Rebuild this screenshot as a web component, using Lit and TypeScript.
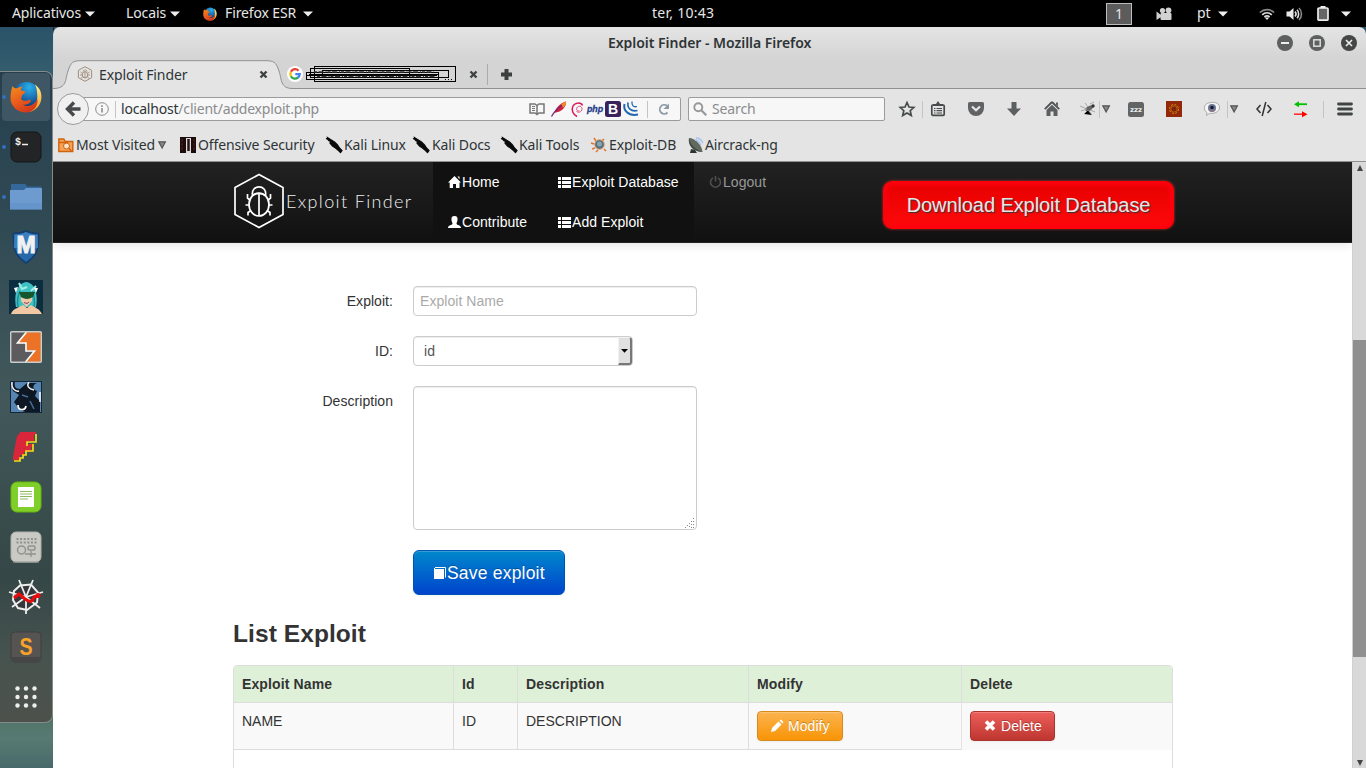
import { LitElement, html, css, svg } from "lit";
import { customElement } from "lit/decorators.js";

/* ---------- shared pieces ---------- */

const uiFont = css`
  :host {
    font-family: "Noto Sans", "Open Sans", sans-serif;
    font-size: 14px;
    line-height: 18px;
    letter-spacing: -0.12px;
    white-space: nowrap;
  }
  * {
    box-sizing: border-box;
  }
  svg {
    display: block;
    flex: none;
    overflow: visible;
  }
`;

const icon = (size: number, body: unknown, w = size) =>
  html`<svg width=${w} height=${size} viewBox="0 0 ${w} ${size}">${body}</svg>`;

const caret = icon(6, svg`<path d="M0 .5h10L5 5.5z" fill="#eee"/>`, 10);
const grayCaret = icon(8, svg`<path d="M.8.8h6.6L4.1 7z" fill="#888" stroke="#555" stroke-width="1.2"/>`, 8);
const cross = icon(9, svg`<path d="M1.5 1.500l6 6M7.500 1.500l-6 6" stroke="#3f4243" stroke-width="2.4"/>`);

const firefox = (s: number) => html`<svg width=${s} height=${s} viewBox="0 0 32 32">
  <defs>
    <radialGradient id="globe" cx=".6" cy=".2" r=".8"><stop offset="0" stop-color="#28b1e8"/><stop offset=".5" stop-color="#1b6fb5"/><stop offset="1" stop-color="#0b2f66"/></radialGradient>
    <linearGradient id="fox" x1=".1" y1="0" x2=".6" y2="1"><stop offset="0" stop-color="#f28a1c"/><stop offset=".55" stop-color="#ea5b1c"/><stop offset="1" stop-color="#d2381c"/></linearGradient>
    <linearGradient id="tail" x1="0" y1="0" x2="0" y2="1"><stop offset="0" stop-color="#fdf08a"/><stop offset="1" stop-color="#f7941d"/></linearGradient>
  </defs>
  <circle cx="16.5" cy="14.5" r="13.5" fill="url(#globe)"/>
  <path d="M25 3.500C30 7 32 12 31.300 18C30.500 25 25 30 19 31C24 27 27.500 22 27.300 15C27.200 10 26.500 6 25 3.500z" fill="url(#tail)"/>
  <path d="M2.500 5C3.500 7 5 7.500 7 7.300C9 6 10 5.500 12.500 5.700C11.500 7 10.500 8.500 11 9.600C12.500 10.200 14.500 10 15.500 10.700C15 12.500 12.500 13 12 14.500C11.500 16 11.500 17.500 11 18C13 20 16 20.500 18.500 19C20 18.500 21.500 19.500 20.500 21C18 24 15 24 13 23.500C18 27 24.500 24 27.500 18C28.500 26 22 31.500 16 31.500C7 31.500 .5 25 .5 17C.5 12 1.500 8 2.500 5z" fill="url(#fox)"/>
</svg>`;

/* ---------- desktop top bar ---------- */

@customElement("system-bar")
class SystemBar extends LitElement {
  static styles = [uiFont, css`
    :host {
      display: grid;
      grid-template-columns: 73px 41px 44px 33px 22px 78px 349px 454px 50px 41px 21px 41px 27px 31px 24px 1fr;
      padding-left: 12px;
      height: 27px;
      align-items: center;
      background: #000;
      color: #e6e6e6;
    }
    span {
      margin-top: -1px;
    }
    .clock {
      letter-spacing: 0.25px;
    }
    .space {
      margin-top: 0;
      width: 26px;
      height: 22px;
      border: 1px solid #bcbcbc;
      background: #5c5c5c;
      text-align: center;
      line-height: 19px;
    }
  `];

  render() {
    return html`
      <span>Aplicativos</span>${caret}
      <span>Locais</span>${caret}
      ${firefox(14)}<span>Firefox ESR</span>${caret}
      <span class="clock">ter, 10:43</span>
      <span class="space">1</span>
      ${icon(14, svg`<g fill="#d2d2d2"><circle cx="6.500" cy="3.600" r="2.600"/><circle cx="12.500" cy="3.300" r="2.900"/><rect x="4.500" y="6" width="11" height="7" rx="1"/><path d="M.5 4.500L5 8v2L.5 13z"/></g>`, 16)}
      <span>pt</span>${caret}
      ${icon(12, svg`<g fill="none" stroke="#ddd" stroke-width="1.700"><path d="M.8 4.500C5 .6 11 .6 15.200 4.500" stroke="#888"/><path d="M3.200 6.800C6 4.300 10 4.300 12.800 6.800"/><path d="M5.400 9C7 7.700 9 7.700 10.600 9"/></g><path d="M5.800 9.500h4.400L8 12z" fill="#eee"/>`, 16)}
      ${icon(14, svg`<path d="M.5 4.500h3L7.500 1v12l-4-3.500h-3z" fill="#e8e8e8"/><g fill="none" stroke="#e0e0e0" stroke-width="1.600"><path d="M9 4.500C10.300 6 10.300 8 9 9.500"/><path d="M11 2.800C13.200 5 13.200 9 11 11.200"/><path d="M13 1C16.300 4 16.300 10 13 13" stroke="#888"/></g>`, 16)}
      ${icon(16, svg`<path d="M3.500 0h5v2h-5z" fill="#eee"/><rect x="1" y="2" width="10" height="12.200" rx="1" fill="#666" stroke="#eee" stroke-width="1.700"/>`, 12)}
      ${caret}
    `;
  }
}

/* ---------- launcher dock ---------- */

const dockIcons = [
  firefox(32),
  icon(32, svg`<rect x="1" y="1" width="30" height="30" rx="6" fill="#222426" stroke="#151617"/><text x="5" y="13.500" font-family="Liberation Mono, monospace" font-weight="bold" font-size="10" fill="#eee">$</text><path d="M12 13.500h6" stroke="#eee" stroke-width="1.500"/>`),
  icon(32, svg`<path d="M1 3h14v-.5l2 3h14V9H1z" fill="#34679a"/><path d="M0 9h14l2-2h16v21.500H0z" fill="#6d9bd0"/><path d="M0 22h32v6.500H0z" fill="#5f8fc6" opacity=".5"/>`),
  icon(34, svg`<path d="M16 1C20 3 24 3.500 28.500 3.500C29 16 28.500 25 16 33C3.500 25 3 16 3.500 3.500C8 3.500 12 3 16 1z" fill="#2768a9" stroke="#123e70" stroke-width="1.500"/><path d="M16 2C20 4 24 4.500 27.500 4.500L28 18H4L4.500 4.500C8 4.500 12 4 16 2z" fill="#3b7fc0"/><text x="16" y="23" text-anchor="middle" font-family="Liberation Sans, sans-serif" font-weight="bold" font-size="23" fill="#f1f1f1" stroke="#f1f1f1">M</text>`, 32),
  icon(34, svg`<rect width="34" height="34" fill="#0a2d40"/><path d="M7 27C5 16 7 4 17 2C27 3 29 16 27 27L22 27H11z" fill="#3fc1c4"/><path d="M9 27c-1-6 0-12 2-16M25 27c1-6 0-12-2-16" stroke="#23888f" stroke-width="1.500" fill="none"/><path d="M10 3l3 6 5-2M27 6l-5 5" stroke="#9ff0e4" stroke-width="2" fill="none"/><path d="M12 12h11v9l-5.500 6-5.500-6z" fill="#efc8a8"/><path d="M10 12h16l-2 5c-5 3-9 2-12 0z" fill="#17572d"/><path d="M2 34c2-6 8-6 12-9l4 3 4-3c4 3 8 3 11 9z" fill="#f1c8a3"/><path d="M5 8l2 5 2-6zM29 8l-2 5-2-5z" fill="#fff"/><path d="M15 22.500l3 1 2-1.500" stroke="#8c4060" fill="none"/>`),
  icon(32, svg`<rect x=".5" y=".5" width="31" height="31" fill="#5c5c5f"/><path d="M16.500 1H31v30H16.500L25 19H16V12H8z" fill="#ec7227"/><path d="M16.500 1L7.500 12H16v8h8.500L15.500 31" stroke="#fff" stroke-width="1.600" fill="none"/><rect x=".7" y=".7" width="30.600" height="30.600" rx="1" fill="none" stroke="#c9cdcc" stroke-width="1.400"/>`),
  icon(32, svg`<rect width="32" height="32" fill="#5586b3"/><path d="M0 0h5C4 5 5 8 10 8L17 2h10c-5 2-5 6 0 8l-2 5 5 5v12H17c-2-2-4-1-7-3L4 21l5-7-6-4z" fill="#0e1724"/><path d="M2 1C1 7 5 11 9 10M19 1c-3 4 0 7 5 8" stroke="#f2f2f2" stroke-width="1.500" fill="none"/><path d="M8 24c0 6 7 6 8 1" stroke="#fff" stroke-width="1.700" fill="none"/><path d="M30 11v10" stroke="#fff" stroke-width="1.500"/><path d="M12 14l6 2M20 20l4 8" stroke="#456f97" stroke-width="1.500"/><rect x=".5" y=".5" width="31" height="31" fill="none" stroke="#14273a"/>`),
  icon(32, svg`<path d="M10 1h16v2h-2v7h-7v3h6v3h-2v5h-7v3h-4v5H3V26L7 5l3-3z" fill="#d9263b"/><path d="M26 3v8h-9v4M23 13v7h-7v4h-3v3h-3v3H4" fill="none" stroke="#f2dc19" stroke-width="1.700"/>`),
  icon(32, svg`<rect x="1" y="1" width="30" height="30" rx="6" fill="#80ce2a" stroke="#63b60e"/><rect x="8" y="6" width="16" height="20" fill="#fff"/><path d="M10 10.500h12M10 13h12M10 15.500h12M10 18h8" stroke="#90b95f" stroke-width="1"/>`),
  icon(32, svg`<rect x="1" y="1" width="30" height="30" rx="5" fill="#c9cac4" stroke="#aeb0ab"/><path d="M3 31h26" stroke="#9fa19c"/><path d="M6.500 8h20M6.500 11.500h20" stroke="#8f918d" stroke-width="2" stroke-dasharray="2 1.600"/><circle cx="11.500" cy="19" r="4" fill="none" stroke="#8f918d" stroke-width="1.500"/><rect x="18" y="15" width="7" height="4" rx="1.500" fill="none" stroke="#8f918d" stroke-width="1.500"/><path d="M15 23h11M21 20v6" stroke="#8f918d" stroke-width="1.300"/>`),
  icon(34, svg`<path d="M11 5.500l11-1 7 8-1 10-10 7.500-9-2-5-8 1-9z" fill="#35373a" stroke="#eee" stroke-width="2"/><g stroke="#eee" stroke-width="1.800" fill="none"><path d="M17 17L10 0M17 17L24 0M17 17L34 12M17 17l14 11M17 17v17M17 17L3 27M17 17L0 12"/></g><path d="M5 18l5-4 6 5c4 3 7 4 9-2l5-1" stroke="#e50d0d" stroke-width="3.200" fill="none"/><circle cx="29" cy="15.500" r="2.600" fill="#e50d0d"/>`),
  icon(32, svg`<rect x="1" y="1" width="30" height="30" rx="4" fill="#555453" stroke="#403f3f"/><path d="M1 26h30v3q0 2-3 2H4q-3 0-3-2z" fill="#474646"/><text x="16" y="23.500" text-anchor="middle" font-family="Liberation Sans, sans-serif" font-weight="bold" font-size="23" textLength="13" lengthAdjust="spacingAndGlyphs" fill="#f6a327">S</text>`),
  icon(24, svg`<g fill="#eee">${[3.5, 12, 20.5].map((y) => [3.5, 12, 20.5].map((x) => svg`<circle cx=${x} cy=${y} r="2.200"/>`))}</g>`),
];

@customElement("side-dock")
class SideDock extends LitElement {
  static styles = [uiFont, css`
    :host {
      display: block;
      width: 53px;
      padding-top: 44px;
      background: linear-gradient(180deg, #2b5269 0, #36616f 8%, #4a6b68 60%, #48695f 90%, #577b72 96%, #47696a 100%);
      border-right: 1px solid #17262b;
    }
    .panel {
      height: 652px;
      padding: 1px 0;
      border: 1px solid #858b8b;
      border-left: 0;
      border-radius: 0 8px 8px 0;
      background: linear-gradient(180deg, #263f4e 0, #314b55 25%, #42585a 50%, #354746 78%, #47534f 90%, #4d514b 100%);
    }
    .slot {
      display: grid;
      grid-template-columns: 8px 36px;
      width: 49px;
      height: 50px;
      padding-bottom: 2px;
      align-items: center;
    }
    .slot svg {
      justify-self: center;
    }
    .dot {
      width: 4px;
      height: 4px;
      margin-left: 2px;
      border-radius: 50%;
    }
    .running .dot {
      background: #3370bd;
    }
    .active {
      height: 48px;
      margin: 0 0 2px 2px;
      width: 48px;
      grid-template-columns: 6px 36px;
      padding-bottom: 0;
      border-radius: 4px;
      background: #3f5664;
    }
    .active .dot {
      margin-left: 0;
    }
  `];

  render() {
    return html`<div class="panel">
      ${dockIcons.map((i, n) => html`<div class="slot ${n < 3 ? "running" : ""} ${n === 0 ? "active" : ""}"><i class="dot"></i>${i}</div>`)}
    </div>`;
  }
}

/* ---------- browser chrome ---------- */

const bug = (c: string) => svg`<path d="M8 .7l6.600 3.600v7.400L8 15.300l-6.600-3.600V4.300z" fill="none" stroke=${c} stroke-width="1"/><ellipse cx="8" cy="8.800" rx="2.700" ry="3.200" fill="none" stroke=${c}/><path d="M8 6v6M6 5.500c0-2 4-2 4 0M3.500 6l2 1.500M12.500 6l-2 1.500M3 9h2.500M13 9h-2.500M3.800 12.300l2-1.500M12.200 12.300l-2-1.500" stroke=${c} fill="none" stroke-width=".9"/>`;

const kali = icon(16, svg`<path d="M0 1.500l2 1-.5-2 3 2 4 2.500 3 3 2 3 2.500 2.500-1.500 2-2-2-3-2.500-3-2-2.500-3 .5-1.500-2-1 .5-1z" fill="#0a0a0a" stroke="#0a0a0a" stroke-width="1.200"/>`);

@customElement("browser-chrome")
class BrowserChrome extends LitElement {
  static styles = [uiFont, css`
    :host {
      display: block;
      height: 135px;
      color: #2e3436;
    }
    .title {
      display: grid;
      grid-template-columns: 554px 669px 32px 32px 1fr;
      height: 33px;
      padding-bottom: 1px;
      align-items: center;
      background: linear-gradient(#e4e4e4, #d4d4d4);
      border-radius: 7px 7px 0 0;
      border-left: 1px solid #d8d8d8;
    }
    .title b {
      font-weight: 600;
      letter-spacing: -0.03px;
    }
    .tabs {
      position: relative;
      display: grid;
      grid-template-columns: 22px 160px 28px 22px 160px 18px 14px 1fr;
      height: 29px;
      padding-left: 24px;
      align-items: center;
      background: #d4d4d4;
      border-bottom: 1px solid #8f9192;
    }
    .tabs span {
      padding-top: 1px;
    }
    .shape {
      position: absolute;
      left: 0;
      top: 0;
    }
    .tabs > :not(.shape) {
      position: relative;
    }
    .sep {
      width: 1px;
      height: 21px;
      background: #aaa;
    }
    .nav {
      display: grid;
      grid-template-columns: 631px 211px 23px 8px 38px 39px 37px 36px 19px 3px 26px 38px 38px 23px 3px 26px 38px 29px 14px 1fr;
      height: 40px;
      padding-left: 4px;
      align-items: center;
      background: #e4e4e4;
    }
    .address {
      display: flex;
      align-items: center;
    }
    .back {
      width: 32px;
      height: 32px;
      border: 1px solid #9b9b9b;
      border-radius: 50%;
      background: #f0f0f0;
      display: grid;
      place-items: center;
      position: relative;
      z-index: 1;
    }
    .url {
      width: 608px;
      height: 24px;
      margin-left: -16px;
      padding-left: 21px;
      border: 1px solid #9b9b9b;
      border-radius: 0 2px 2px 0;
      background: #f7f7f7;
      display: grid;
      grid-template-columns: 20px 6px 408px 22px 20px 16px 18px 18px 24px 11px 1fr;
      align-items: center;
    }
    .path {
      color: #8a8c8d;
      letter-spacing: -0.2px;
    }
    .path b {
      font-weight: 400;
      color: #2e3436;
    }
    .thin {
      width: 1px;
      height: 17px;
      background: #c4c4c4;
    }
    .search {
      width: 197px;
      height: 24px;
      padding-left: 4px;
      border: 1px solid #9b9b9b;
      border-radius: 2px;
      background: #f7f7f7;
      display: flex;
      gap: 5px;
      align-items: center;
      color: #8a8c8d;
    }
    .marks {
      display: grid;
      grid-template-columns: 18px 82px 22px 18px 128px 18px 69px 19px 69px 18px 72px 18px 79px 17px 1fr;
      height: 33px;
      padding-left: 5px;
      align-items: center;
      background: #e4e4e4;
      border-bottom: 1px solid #8f9192;
    }
  `];

  render() {
    const thin = html`<i class="thin"></i>`;
    return html`
      <div class="title">
        <span></span><b>Exploit Finder - Mozilla Firefox</b>
        ${icon(16, svg`<circle cx="8" cy="8" r="8" fill="#5e6060"/><path d="M4 8h8" stroke="#eee" stroke-width="2"/>`)}
        ${icon(16, svg`<circle cx="8" cy="8" r="8" fill="#5e6060"/><rect x="4.800" y="4.800" width="6.400" height="6.400" fill="none" stroke="#ddd" stroke-width="1.500"/>`)}
        ${icon(16, svg`<circle cx="8" cy="8" r="8" fill="#454747"/><path d="M5 5l6 6M11 5l-6 6" stroke="#eee" stroke-width="1.600"/>`)}
      </div>
      <div class="tabs">
        <svg class="shape" width="240" height="29" viewBox="0 0 240 29"><path d="M0 28.500C14 28.500 12 20 15 11C18 2 20 .7 28 .7H212C221 .7 223 2 226 11C229 20 227 28.500 240 28.500V29H0z" fill="#e4e4e4" /><path d="M0 28.500C14 28.500 12 20 15 11C18 2 20 .7 28 .7H212C221 .7 223 2 226 11C229 20 227 28.500 240 28.500" fill="none" stroke="#8f9192"/></svg>
        ${icon(16, bug("#a18d7b"))}<span>Exploit Finder</span>${cross}
        ${icon(16, svg`<circle cx="8" cy="8" r="8" fill="#fff"/><g fill="none" stroke-width="2.300"><path d="M11.500 4.600A4.700 4.700 0 0 0 3.900 5.800" stroke="#ea4335"/><path d="M3.900 5.800A4.700 4.700 0 0 0 3.900 10.200" stroke="#fbbc05"/><path d="M3.900 10.200A4.700 4.700 0 0 0 11 11.500" stroke="#34a853"/><path d="M11 11.500A4.700 4.700 0 0 0 12.700 8.200H8.300" stroke="#4285f4"/></g>`)}
        ${icon(18, svg`<g fill="none" stroke="#000"><rect x="5.500" y="1.500" width="141" height="15"/><rect x="1.500" y="3.500" width="99" height="9"/><rect x="-2.500" y="7.500" width="132" height="7"/><rect x="13.500" y="5.500" width="126" height="7"/><path d="M-2 10.500h130M0 9.500h130" stroke-width="1"/><path d="M5 7h120M8 11.500h118" stroke="#333" stroke-width="1.500" stroke-dasharray="3 1.500 5 2 1 1"/><path d="M136 14.500h8" stroke-dasharray="1 2"/></g>`, 150)}
        ${cross}<i class="sep"></i>
        ${icon(11, svg`<path d="M5.500 0v11M0 5.500h11" stroke="#3d4041" stroke-width="4"/>`)}
      </div>
      <div class="nav">
        <div class="address">
          <div class="back">${icon(16, svg`<path d="M9 1.500L2.500 8L9 14.500M3 8h12.500" fill="none" stroke="#474a4b" stroke-width="3.400"/>`)}</div>
          <div class="url">
            ${icon(14, svg`<circle cx="7" cy="7" r="6.300" fill="none" stroke="#8a8c8d"/><path d="M7 6v4.500M7 3.300v1.600" stroke="#8a8c8d" stroke-width="1.600"/>`)}
            ${thin}
            <span class="path"><b>localhost</b>/client/addexploit.php</span>
            ${icon(14, svg`<path d="M1 2h5l2 1.500L10 2h5v9h-5l-2 1.500L6 11H1zM8 3v9" fill="none" stroke="#777" stroke-width="1.500"/><path d="M3 4.500h3M3 6.500h3M3 8.500h3" stroke="#777"/>`, 16)}
            ${icon(16, svg`<path d="M15 .5C15.500 4 13 8 8.500 10.500L3 12C5 7 9 2 15 .5z" fill="#d0213c"/><path d="M15 .5C13 1 11 2.500 9.500 4l3 2.500C14.500 4.500 15.300 3 15 .5z" fill="#f08a28"/><path d="M.5 15.500C3 11 7 7 11 4" stroke="#70277a" fill="none" stroke-width="1.300"/>`)}
            ${icon(15, svg`<path d="M8.500 8.800C6 9.500 4.500 7 6.500 5C9 3 12 5.500 10.800 8C9.500 11 6 10.500 5.500 9" fill="none" stroke="#df4b7e" stroke-width="1"/><path d="M11.500 3.500C10 0 4 .5 2 4C0 8 2 12.500 6 14.500" fill="none" stroke="#d91857" stroke-width="1.500"/>`, 13)}
            ${icon(14, svg`<text x="8" y="10" text-anchor="middle" textLength="16" lengthAdjust="spacingAndGlyphs" font-family="Liberation Sans, sans-serif" font-style="italic" font-weight="bold" font-size="9.500" fill="#263b88" stroke="#263b88" stroke-width=".3">php</text>`, 16)}
            ${icon(16, svg`<rect width="16" height="16" rx="2.500" fill="#39215b"/><text x="8" y="13" text-anchor="middle" font-family="Liberation Sans, sans-serif" font-weight="bold" font-size="14" fill="#fff">B</text>`)}
            ${icon(16, svg`<g fill="none" stroke="#2367b0"><path d="M1.500 3C0 9 5 15.500 15 13.500" stroke-width="2"/><path d="M5 1.500C4 7 8 11 14.500 9.500" stroke-width="1.700"/><path d="M9 .5C8.500 4.500 10.500 6.500 14 5.500" stroke-width="1.300"/></g>`)}
            ${thin}
            ${icon(12, svg`<path d="M9.500 9.500A4.500 4.500 0 1 1 9 2.800" fill="none" stroke="#8c9ba5" stroke-width="1.800"/><path d="M11 .5V6H5.500z" fill="#8c9ba5"/>`)}
          </div>
        </div>
        <div class="search">${icon(14, svg`<circle cx="5.300" cy="5.300" r="4" fill="none" stroke="#979899" stroke-width="1.900"/><path d="M8.300 8.300l5 5" stroke="#979899" stroke-width="2.200"/>`)}<span>Search</span></div>
        ${icon(16, svg`<path d="M8 1.500l2 4.500 4.800.5-3.600 3.200 1.100 4.800L8 12l-4.300 2.500 1.100-4.800L1.200 6.500 6 6z" fill="none" stroke="#474a4b" stroke-width="1.700"/>`)}
        ${thin}
        ${icon(16, svg`<rect x="1.800" y="4" width="12.400" height="10.300" rx="1" fill="none" stroke="#474a4b" stroke-width="1.700"/><path d="M3 3h3l2-3 2 3h3v2H3z" fill="#474a4b"/><path d="M4 7.500h1.500M6.500 7.500H12M4 9.700h1.500M6.500 9.700H12M4 12h1.500M6.500 12H12" stroke="#474a4b" stroke-width="1.200"/>`)}
        ${icon(14, svg`<path d="M0 1.500Q0 0 1.500 0h13Q16 0 16 1.500V6A8 8 0 0 1 0 6z" fill="#606263"/><path d="M4 4.500L8 8.200 12 4.500" fill="none" stroke="#e8e8e8" stroke-width="2.200"/>`, 16)}
        ${icon(15, svg`<path d="M4.500 0h5v6.500H14L7 14 0 6.500h4.500z" fill="#5c5f60"/>`, 14)}
        ${icon(16, svg`<path d="M8 1L.8 8.200M8 1l7.200 7.200" stroke="#4e5152" stroke-width="1.800"/><path d="M8 3.800L13.500 9v6H9.500v-4.500h-3V15h-4V9zM12 1.500h2v4l-2-2z" fill="#5c5f60"/>`)}
        ${icon(14, svg`<ellipse cx="9" cy="6.500" rx="4" ry="2.200" fill="#666" transform="rotate(-30 9 6.500)"/><circle cx="13" cy="4" r="1.700" fill="#333"/><path d="M0 4l7 3M1 9l6-2M4 12l4-4 4 5M5 1l3 4M10 2l4-2M10 8l5 2" stroke="#999" stroke-width=".8"/>`, 16)}
        ${thin}${grayCaret}
        ${icon(15, svg`<rect width="16" height="15" rx="2.500" fill="#626465"/><text x="8" y="10" text-anchor="middle" textLength="12" font-family="DejaVu Sans, sans-serif" font-weight="bold" font-size="7" fill="#eee">zzz</text>`, 16)}
        ${icon(16, svg`<rect width="16" height="16" fill="#91290a"/><circle cx="8" cy="8" r="4.500" fill="none" stroke="#dd8c16" stroke-dasharray="2 1.530" stroke-width="1"/><circle cx="8" cy="8" r="3.200" fill="#7f230a" stroke="#b8650e"/>`)}
        ${icon(14, svg`<path d="M3 10.500C-1 8-.5 2 5 .8C12-.8 16 2 15.500 6C15 10 10 12 5.500 11.300L2.500 13.500z" fill="#f5f5f5" stroke="#999" stroke-width=".8"/><circle cx="8" cy="6" r="4" fill="#6b7795"/><circle cx="8" cy="5.500" r="1.800" fill="#171b2b"/><path d="M5 8.500l5 .5" stroke="#a96f6b"/>`, 16)}
        ${thin}${grayCaret}
        ${icon(14, svg`<path d="M4.500 3L1 7l3.500 4M11.500 3L15 7l-3.500 4M9.800 0L6.200 14" fill="none" stroke="#333" stroke-width="1.500"/>`, 16)}
        ${icon(16, svg`<path d="M3 3.200h10" stroke="#00c000" stroke-width="1.800"/><path d="M5 .2v6L0 3.200z" fill="#00c000"/><path d="M0 13.200h9" stroke="#f22" stroke-width="1.500"/><path d="M8 10.200v6l5.500-3z" fill="#f00"/>`)}
        ${thin}
        ${icon(14, svg`<path d="M1.500 2h13M1.500 7h13M1.500 12h13" stroke="#414445" stroke-width="2.800" stroke-linecap="round"/>`, 16)}
      </div>
      <div class="marks">
        ${icon(16, svg`<path d="M.8 14.500V2h5l1.500 2.500h7.500v10z" fill="#f4a258" stroke="#d0640d" stroke-width="1.400"/><circle cx="8.500" cy="9" r="3" fill="#fbe2c8" stroke="#d0640d"/><path d="M10.500 11l3 3M1 5.500h9" stroke="#d0640d" stroke-width="1.300"/>`)}
        <span>Most Visited</span>${grayCaret}
        ${icon(16, svg`<rect width="16" height="16" fill="#1c0d0d"/><rect x="6" y="1" width="5" height="15" fill="#ddd"/><path d="M8.500 2v12" stroke="#2b1010" stroke-width="2.500"/><path d="M2 2v12M14 2v12" stroke="#5d2020" stroke-dasharray="3 1"/>`)}
        <span>Offensive Security</span>
        ${kali}<span>Kali Linux</span>
        ${kali}<span>Kali Docs</span>
        ${kali}<span>Kali Tools</span>
        ${icon(16, svg`<g stroke="#e27326" stroke-width="1.500" fill="none"><path d="M5 4L3 1M11 4l2-2M3 7L0 6M4 11l-3 1M7 13l-2 2M13 12l2 2"/></g><circle cx="8.500" cy="7.500" r="4.800" fill="#53717e" stroke="#e8a474" stroke-width="1"/><circle cx="8.500" cy="7" r="2.500" fill="#8ba5af"/>`)}
        <span>Exploit-DB</span>
        ${icon(16, svg`<path d="M1 1C-.5 8 5 15 14.500 15z" fill="#414943"/><path d="M1 1C7 1 14 8 14.500 15C8 13 2 8 1 1z" fill="#62695f"/><path d="M3 12l-1 4h7l-2-3z" fill="#2d332e"/><path d="M7 3c3 0 5 3 6 5M8 1c4 0 6 3 7 5" stroke="#a7c2ec" fill="none" stroke-width="1.300"/>`)}
        <span>Aircrack-ng</span>
      </div>
    `;
  }
}

/* ---------- web page ---------- */

const listIcon = icon(14, svg`<path d="M0 2h3v3H0zM4 2h9v3H4zM0 6h3v3H0zM4 6h9v3H4zM0 10h3v3H0zM4 10h9v3H4z" fill="#fff"/>`);

@customElement("exploit-page")
class ExploitPage extends LitElement {
  static styles = css`
    :host {
      display: block;
      height: 606px;
      overflow: hidden;
      background: #fff;
      font: 14px/20px "Liberation Sans", Arial, sans-serif;
      letter-spacing: 0.05px;
      color: #333;
      white-space: nowrap;
    }
    * {
      box-sizing: border-box;
    }
    svg {
      display: block;
      flex: none;
      overflow: visible;
    }
    .navbar {
      display: flex;
      height: 81px;
      padding-left: 180px;
      background: linear-gradient(#222, #111);
      border-bottom: 1px solid #252525;
      box-shadow: 0 1px 10px rgba(0, 0, 0, 0.12);
    }
    .brand {
      display: flex;
      width: 200px;
      padding: 11px 0 0 1px;
    }
    .brand span {
      font: 300 18px/56px "Lato", sans-serif;
      letter-spacing: 1.35px;
      color: #f0f0f0;
      margin-left: 2px;
    }
    .links {
      display: grid;
      grid-template-columns: 110px 151px;
      grid-template-rows: 40px 40px;
      background: #111;
    }
    .link {
      display: flex;
      padding-left: 15px;
      align-items: center;
      color: #fff;
    }
    .link svg {
      margin-top: -1px;
    }
    .muted {
      height: 40px;
      width: 189px;
      color: #999;
    }
    .download {
      width: 291px;
      height: 48px;
      margin-top: 19px;
      border-radius: 9px;
      border: 1px solid #f00;
      background: linear-gradient(#e60000, #ff0a0a);
      box-shadow: 0 0 3px rgba(255, 60, 60, 0.7), inset 0 0 4px 3px #ff0010;
      color: #e6e6e6;
      font-size: 20px;
      letter-spacing: -0.08px;
      line-height: 46px;
      text-align: center;
      text-shadow: 1px 1px 1px #333;
    }
    .form {
      display: grid;
      grid-template-columns: 340px 284px;
      column-gap: 20px;
      row-gap: 20px;
      padding-top: 43px;
      justify-items: start;
    }
    .label {
      padding-top: 5px;
      justify-self: end;
    }
    .field {
      width: 284px;
      height: 30px;
      padding: 4px 6px;
      border: 1px solid #ccc;
      border-radius: 4px;
      background: #fff;
      box-shadow: inset 0 1px 1px rgba(0, 0, 0, 0.075);
      color: #aaa;
    }
    .select {
      width: 220px;
      padding: 0 0 0 10px;
      display: flex;
      justify-content: space-between;
      line-height: 28px;
      color: #555;
    }
    .arrow {
      width: 14px;
      height: 28px;
      background: #e0e0e0;
      border: 1px solid #f2f2f2;
      border-right: 2px solid #777;
      border-bottom: 2px solid #777;
      border-radius: 0 3px 3px 0;
      display: grid;
      place-items: center;
    }
    .area {
      height: 144px;
      display: flex;
      align-items: flex-end;
      justify-content: flex-end;
      padding: 0 1px 1px 0;
    }
    .save {
      grid-column: 2;
      width: 152px;
      height: 45px;
      display: flex;
      align-items: center;
      padding-left: 20px;
      border: 1px solid #0052b4;
      border-radius: 6px;
      background: linear-gradient(#08c, #04c);
      box-shadow: inset 0 1px 0 rgba(255, 255, 255, 0.2), 0 1px 2px rgba(0, 0, 0, 0.05);
      color: #fff;
      font-size: 17.5px;
      letter-spacing: 0.2px;
      text-shadow: 0 -1px 0 rgba(0, 0, 0, 0.25);
    }
    h3 {
      margin: 19px 0 11px 180px;
      font-size: 24.5px;
      line-height: 40px;
      letter-spacing: 0.08px;
    }
    .table {
      width: 940px;
      height: 140px;
      margin-left: 180px;
      border: 1px solid #ddd;
      border-radius: 4px;
      overflow: hidden;
    }
    .row {
      display: grid;
      grid-template-columns: 219px 64px 231px 213px 1fr;
    }
    .row > * {
      padding: 8px;
      border-left: 1px solid #ddd;
      border-bottom: 1px solid #ddd;
    }
    .row > :first-child {
      border-left: 0;
    }
    .head > * {
      height: 37px;
      background: #dff0d8;
      font-weight: bold;
      letter-spacing: 0.12px;
    }
    .body > * {
      height: 47px;
      background: #f9f9f9;
      letter-spacing: 0;
    }
    .body > :last-child {
      border-bottom: 0;
      border-left-color: #e4e4e4;
    }
    .btn {
      display: flex;
      align-items: center;
      gap: 4px;
      height: 30px;
      padding-left: 12px;
      border-radius: 4px;
      color: #fff;
      letter-spacing: 0.05px;
      text-shadow: 0 -1px 0 rgba(0, 0, 0, 0.25);
      box-shadow: inset 0 1px 0 rgba(255, 255, 255, 0.2), 0 1px 2px rgba(0, 0, 0, 0.05);
    }
    .warning {
      width: 86px;
      border: 1px solid #d68a20;
      background: linear-gradient(#fbb450, #f89406);
    }
    .danger {
      width: 85px;
      border: 1px solid #a93430;
      background: linear-gradient(#ee5f5b, #bd362f);
    }
  `;

  render() {
    return html`
      <div class="navbar">
        <div class="brand">
          <svg width="50" height="56" viewBox="0 0 50 56" fill="none" stroke="#fff" stroke-width="1.700">
            <path d="M25 1.500L49 14.500V41.500L25 54.500L1 41.500V14.500z"/>
            <ellipse cx="25" cy="31.500" rx="10" ry="11.500"/>
            <path d="M25 20v23M18.500 22.500C16.500 11 33.500 11 31.500 22.500M18.500 22.500Q25 18.500 31.500 22.500M16.500 27.500L13.500 25V21M33.500 27.500L36.500 25V21M15.500 32H11.500M34.500 32H38.500M17 37.500L14 39.500V42.500M33 37.500L36 39.500V42.500"/>
          </svg>
          <span>Exploit Finder</span>
        </div>
        <div class="links">
          <div class="link">${icon(14, svg`<path d="M6.500 1L13 7.500h-1.500V13H8V9H5v4H1.700V7.500H0z" fill="#fff"/><path d="M9.500 1.500h2v3z" fill="#fff"/>`)}Home</div>
          <div class="link">${listIcon}Exploit Database</div>
          <div class="link">${icon(14, svg`<path d="M6.500 1C9 1 9.800 2.500 9.500 5C9.300 7 8.500 7.500 8.500 9C9 10 13 10 13 13H0C0 10 4 10 4.500 9C4.500 7.500 3.700 7 3.500 5C3.200 2.500 4 1 6.500 1z" fill="#fff"/>`)}Contribute</div>
          <div class="link">${listIcon}Add Exploit</div>
        </div>
        <div class="link muted">${icon(14, svg`<path d="M4 2.800A5 5 0 1 0 9 2.800M6.500 1v5.500" fill="none" stroke="#505050" stroke-width="1.500"/>`)}Logout</div>
        <div class="download">Download Exploit Database</div>
      </div>

      <div class="form">
        <span class="label">Exploit:</span>
        <div class="field">Exploit Name</div>
        <span class="label">ID:</span>
        <div class="field select"><span>id</span><span class="arrow">${icon(4, svg`<path d="M0 0h7L3.500 3.800z" fill="#000"/>`, 7)}</span></div>
        <span class="label">Description</span>
        <div class="field area">${icon(11, svg`<path d="M9.500 1v10M7.500 4v7M5.500 6v5M3.500 8v3M1.500 10v1" stroke="#888" stroke-dasharray="1 2"/>`, 11)}</div>
        <div class="save">${icon(13, svg`<path d="M1.500 1.500h10v10" fill="none" stroke="#fff" stroke-width="1"/><path d="M0 3h10v10H0z" fill="#fff"/><path d="M0 3l2-2" stroke="#fff"/>`, 13)}Save exploit</div>
      </div>

      <h3>List Exploit</h3>
      <div class="table">
        <div class="row head"><span>Exploit Name</span><span>Id</span><span>Description</span><span>Modify</span><span>Delete</span></div>
        <div class="row body">
          <span>NAME</span><span>ID</span><span>DESCRIPTION</span>
          <span><div class="btn warning">${icon(14, svg`<path d="M1 13l1-4L8.500 2.500l3 3L5 12zM9.500 1.500L11 .5l2.500 2.500-1.200 1.500z" fill="#fff"/>`)}Modify</div></span>
          <span><div class="btn danger">${icon(14, svg`<path d="M3 2.500l8 8M11 2.500l-8 8" stroke="#fff" stroke-width="3.600"/>`)}Delete</div></span>
        </div>
      </div>
    `;
  }
}

/* ---------- desktop ---------- */

@customElement("app-root")
class AppRoot extends LitElement {
  static styles = css`
    :host {
      display: grid;
      grid-template-columns: 53px 1313px;
      grid-template-rows: 27px 741px;
      width: 1366px;
      height: 768px;
      overflow: hidden;
      background: #2b5269;
    }
    system-bar {
      grid-column: 1 / 3;
    }
    .view {
      display: grid;
      grid-template-columns: 1299px 14px;
    }
    .scroll {
      display: flex;
      flex-direction: column;
      align-items: center;
      justify-content: space-between;
      padding: 3px 0 2px;
      background: #d9d9d9;
      border-left: 1px solid #cfcfcf;
    }
    .thumb {
      width: 14px;
      height: 317px;
      margin-top: 65px;
      background: #909090;
    }
    .scroll svg {
      display: block;
    }
  `;

  render() {
    return html`
      <system-bar></system-bar>
      <side-dock></side-dock>
      <div>
        <browser-chrome></browser-chrome>
        <div class="view">
          <exploit-page></exploit-page>
          <div class="scroll">
            ${icon(6, svg`<path d="M0 6h6L3 0z" fill="#444"/>`, 6)}
            <div class="thumb"></div>
            ${icon(6, svg`<path d="M0 0h6L3 6z" fill="#444"/>`, 6)}
          </div>
        </div>
      </div>
    `;
  }
}
